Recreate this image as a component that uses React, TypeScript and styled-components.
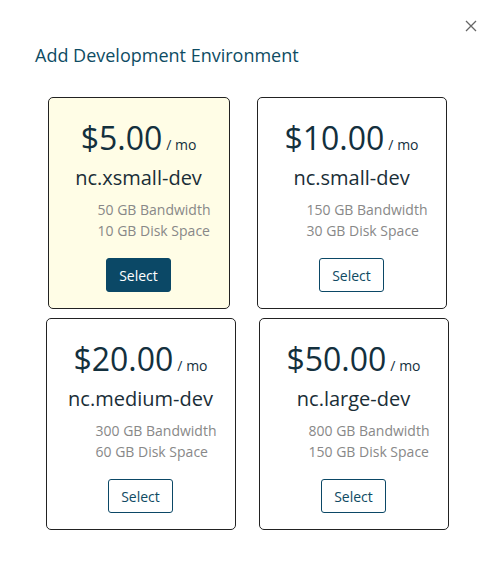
import React from "react";
import styled, { createGlobalStyle } from "styled-components";

const GlobalStyle = createGlobalStyle`
    html, body {
        margin: 0;
        padding: 0;
        background: #ffffff;
    }
    body {
        font-family: "Open Sans", "Liberation Sans", sans-serif;
    }
`;

interface Plan {
    price: string;
    name: string;
    bandwidth: string;
    disk: string;
    width: number;
    nudge: number;
    selected?: boolean;
}

const plans: Plan[] = [
    { price: "$5.00", name: "nc.xsmall-dev", bandwidth: "50 GB Bandwidth", disk: "10 GB Disk Space", width: 182, nudge: 4, selected: true },
    { price: "$10.00", name: "nc.small-dev", bandwidth: "150 GB Bandwidth", disk: "30 GB Disk Space", width: 190, nudge: 4 },
    { price: "$20.00", name: "nc.medium-dev", bandwidth: "300 GB Bandwidth", disk: "60 GB Disk Space", width: 190, nudge: 0 },
    { price: "$50.00", name: "nc.large-dev", bandwidth: "800 GB Bandwidth", disk: "150 GB Disk Space", width: 190, nudge: 0 },
];

const Modal = styled.div`
    width: 495px;
    height: 564px;
    box-sizing: border-box;
    background: #ffffff;
    display: flex;
    flex-direction: column;
`;

const CloseRow = styled.div`
    display: flex;
    justify-content: flex-end;
    padding: 19px 18px 0 0;
`;

const CloseButton = styled.button`
    width: 13px;
    height: 13px;
    padding: 0;
    border: 0;
    background: none;
    display: flex;
    align-items: center;
    justify-content: center;
    cursor: pointer;
`;

const Title = styled.h2`
    margin: 11px 0 0 35px;
    font-size: 18px;
    line-height: 24px;
    font-weight: 400;
    color: #0e4c63;
`;

const Grid = styled.div`
    display: grid;
    grid-template-columns: 213px 213px;
    row-gap: 9px;
    padding: 30px 0 0 34px;
`;

const Card = styled.div<{ $width: number; $nudge: number; $selected?: boolean }>`
    width: ${(p) => p.$width}px;
    height: 212px;
    box-sizing: border-box;
    justify-self: center;
    margin-right: ${(p) => p.$nudge}px;
    border: 1px solid #222;
    border-radius: 5px;
    background: ${(p) => (p.$selected ? "#fffde6" : "#ffffff")};
    display: flex;
    flex-direction: column;
    align-items: center;
    padding-top: 21px;
`;

const Price = styled.div`
    color: #13303d;
    font-size: 32px;
    line-height: 38px;
    white-space: nowrap;

    & > span {
        font-size: 14px;
        line-height: 1;
        margin-left: 4px;
    }
`;

const Name = styled.div`
    margin-top: 9px;
    font-size: 20px;
    line-height: 24px;
    color: #1a2e37;
`;

const Features = styled.ul`
    align-self: stretch;
    list-style: none;
    margin: 9px 0 0;
    padding: 0 0 0 49px;
    font-size: 14px;
    line-height: 21px;
    color: #888888;
    white-space: nowrap;
`;

const SelectButton = styled.button<{ $filled?: boolean }>`
    margin-top: 17px;
    width: 65px;
    height: 34px;
    box-sizing: border-box;
    border: 1px solid #0b4866;
    border-radius: 3px;
    background: ${(p) => (p.$filled ? "#0b4866" : "#ffffff")};
    color: ${(p) => (p.$filled ? "#ffffff" : "#0e4a63")};
    font-family: inherit;
    font-size: 14px;
    cursor: pointer;
`;

const App: React.FC = () => {
    return (
        <>
            <GlobalStyle />
            <Modal>
                <CloseRow>
                    <CloseButton aria-label="Close">
                        <svg width="12" height="12" viewBox="0 0 12 12">
                            <path d="M1 1L11 11M11 1L1 11" stroke="#666" strokeWidth="1.3" />
                        </svg>
                    </CloseButton>
                </CloseRow>
                <Title>Add Development Environment</Title>
                <Grid>
                    {plans.map((plan) => (
                        <Card
                            key={plan.name}
                            $width={plan.width}
                            $nudge={plan.nudge}
                            $selected={plan.selected}
                        >
                            <Price>
                                {plan.price}
                                <span>/ mo</span>
                            </Price>
                            <Name>{plan.name}</Name>
                            <Features>
                                <li>{plan.bandwidth}</li>
                                <li>{plan.disk}</li>
                            </Features>
                            <SelectButton $filled={plan.selected}>Select</SelectButton>
                        </Card>
                    ))}
                </Grid>
            </Modal>
        </>
    );
};

export default App;
